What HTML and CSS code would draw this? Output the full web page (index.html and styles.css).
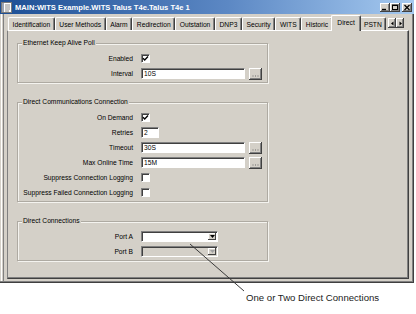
FILE: index.html
```html
<!DOCTYPE html>
<html lang="en">
<head>
    <meta charset="UTF-8">
    <title>MAIN:WITS Example.WITS Talus T4e.Talus T4e 1</title>
    <link rel="stylesheet" href="styles.css">
</head>
<body>
<div class="page">
    <div class="window">
        <div class="titlebar">
            <svg class="app-icon" width="11" height="11" viewBox="0 0 11 11">
                <rect x="0.5" y="0.5" width="10" height="10" fill="#fff" stroke="#7a7a7a"/>
                <rect x="1" y="1" width="2" height="9" fill="#9aa4b4"/>
                <path d="M4 3h5M4 5h5M4 7h5M4 9h4" stroke="#8a8a8a" stroke-width="1"/>
            </svg>
            <span class="title">MAIN:WITS Example.WITS Talus T4e.Talus T4e 1</span>
            <div class="caption-btns">
                <span class="cbtn"><svg width="8" height="7" viewBox="0 0 8 7"><path d="M1 5.5h4" stroke="#000" stroke-width="1.4"/></svg></span>
                <span class="cbtn"><svg width="8" height="7" viewBox="0 0 8 7"><rect x="1.5" y="1" width="5" height="4.5" fill="none" stroke="#000"/><path d="M1.5 1.5h5" stroke="#000"/></svg></span>
                <span class="cbtn close"><svg width="8" height="7" viewBox="0 0 8 7"><path d="M1.5 1l5 5M6.5 1l-5 5" stroke="#000" stroke-width="1.2"/></svg></span>
            </div>
        </div>

        <div class="tabstrip">
            <div class="tab">Identification</div>
            <div class="tab">User Methods</div>
            <div class="tab">Alarm</div>
            <div class="tab">Redirection</div>
            <div class="tab">Outstation</div>
            <div class="tab">DNP3</div>
            <div class="tab">Security</div>
            <div class="tab">WITS</div>
            <div class="tab">Historic</div>
            <div class="tab active">Direct</div>
            <div class="tab">PSTN</div>
            <div class="tab-scroll">
                <span class="sbtn"><svg width="5" height="5" viewBox="0 0 5 5"><path d="M3.5 0.5v4L1 2.5z" fill="#000"/></svg></span>
                <span class="sbtn"><svg width="5" height="5" viewBox="0 0 5 5"><path d="M1.5 0.5v4L4 2.5z" fill="#000"/></svg></span>
            </div>
        </div>

        <div class="panel">
            <div class="group">
                <span class="group-title">Ethernet Keep Alive Poll</span>
                <div class="row">
                    <label>Enabled</label>
                    <div class="field"><span class="check on"><svg width="7" height="7" viewBox="0 0 7 7"><path d="M1 3.2l1.7 1.8L6 1.5" fill="none" stroke="#000" stroke-width="1.3"/></svg></span></div>
                </div>
                <div class="row">
                    <label>Interval</label>
                    <div class="field"><span class="textbox wide">10S</span><span class="browse"><svg width="7" height="2" viewBox="0 0 7 2"><path d="M0.5 1h6" stroke="#6a6a6a" stroke-width="1" stroke-dasharray="1 1.5"/></svg></span></div>
                </div>
            </div>

            <div class="group">
                <span class="group-title">Direct Communications Connection</span>
                <div class="row">
                    <label>On Demand</label>
                    <div class="field"><span class="check on"><svg width="7" height="7" viewBox="0 0 7 7"><path d="M1 3.2l1.7 1.8L6 1.5" fill="none" stroke="#000" stroke-width="1.3"/></svg></span></div>
                </div>
                <div class="row">
                    <label>Retries</label>
                    <div class="field"><span class="textbox small">2</span></div>
                </div>
                <div class="row">
                    <label>Timeout</label>
                    <div class="field"><span class="textbox wide">30S</span><span class="browse"><svg width="7" height="2" viewBox="0 0 7 2"><path d="M0.5 1h6" stroke="#6a6a6a" stroke-width="1" stroke-dasharray="1 1.5"/></svg></span></div>
                </div>
                <div class="row">
                    <label>Max Online Time</label>
                    <div class="field"><span class="textbox wide">15M</span><span class="browse"><svg width="7" height="2" viewBox="0 0 7 2"><path d="M0.5 1h6" stroke="#6a6a6a" stroke-width="1" stroke-dasharray="1 1.5"/></svg></span></div>
                </div>
                <div class="row">
                    <label>Suppress Connection Logging</label>
                    <div class="field"><span class="check"></span></div>
                </div>
                <div class="row">
                    <label>Suppress Failed Connection Logging</label>
                    <div class="field"><span class="check"></span></div>
                </div>
            </div>

            <div class="group">
                <span class="group-title">Direct Connections</span>
                <div class="row">
                    <label>Port A</label>
                    <div class="field"><span class="combo"><span class="combo-btn"><svg width="5" height="3" viewBox="0 0 5 3"><path d="M0 0h5L2.5 3z" fill="#000"/></svg></span></span></div>
                </div>
                <div class="row">
                    <label>Port B</label>
                    <div class="field"><span class="combo disabled"><span class="combo-btn"><svg width="5" height="3" viewBox="0 0 5 3"><path d="M0 0h5L2.5 3z" fill="#a0a0a0"/></svg></span></span></div>
                </div>
            </div>
        </div>
    </div>

    <svg class="leader" width="416" height="314" viewBox="0 0 416 314">
        <line x1="190" y1="244" x2="244" y2="291" stroke="#3a3a3a" stroke-width="1"/>
    </svg>
    <div class="callout">One or Two Direct Connections</div>
</div>
</body>
</html>
```

FILE: styles.css
```css
/* Global */
body {
    margin: 0;
    background-color: #ffffff;
    font-family: "Liberation Sans", Arial, sans-serif;
    font-size: 6.7px;
    color: #000;
}

.page {
    position: relative;
    width: 416px;
    height: 314px;
}

/* Window frame */
.window {
    width: 414px;
    height: 283px;
    display: flex;
    flex-direction: column;
    background-color: #d4d0c8;
    box-shadow: inset -1px -1px 0 #404040,
                inset -2px -2px 0 #808080,
                inset 1px 0 0 #d4d0c8,
                inset 2px 0 0 #ffffff,
                inset 3px 0 0 #d4d0c8,
                inset 4px 0 0 #808080;
}

.titlebar {
    height: 14px;
    display: flex;
    align-items: center;
    background: linear-gradient(to right, #1d4f95, #5c88c4 55%, #a6caf0);
    color: #fff;
}

.app-icon {
    margin: 0 3px 0 1px;
}

.title {
    font-weight: bold;
    font-size: 7.6px;
}

.caption-btns {
    margin-left: auto;
    margin-right: 2px;
    display: flex;
}

.cbtn {
    width: 10px;
    height: 9px;
    box-sizing: border-box;
    display: flex;
    align-items: center;
    justify-content: center;
    background-color: #d4d0c8;
    box-shadow: inset -1px -1px 0 #404040, inset 1px 1px 0 #fff, inset -2px -2px 0 #808080;
}

.cbtn.close {
    margin-left: 2px;
}

/* Tabs */
.tabstrip {
    margin-top: 3px;
    height: 13px;
    display: flex;
    align-items: flex-start;
    padding-left: 8px;
}

.tab {
    height: 13px;
    box-sizing: border-box;
    padding: 0 3.6px;
    display: flex;
    align-items: center;
    border-top: 1px solid #fff;
    border-left: 1px solid #fff;
    border-right: 1px solid #404040;
    border-radius: 2px 2px 0 0;
    box-shadow: inset -1px 0 0 #808080;
    white-space: nowrap;
}

.tab.active {
    position: relative;
    z-index: 1;
    height: 16px;
    margin: -2px -2px 0;
    padding: 0 5.6px 2px;
    background-color: #d4d0c8;
}

.tab-scroll {
    margin-left: auto;
    margin-right: 10px;
    margin-top: 1px;
    display: flex;
}

.sbtn {
    width: 8px;
    height: 10px;
    box-sizing: border-box;
    display: flex;
    align-items: center;
    justify-content: center;
    box-shadow: inset -1px -1px 0 #404040, inset 1px 1px 0 #fff, inset -2px -2px 0 #808080;
}

/* Tab page */
.panel {
    flex: 1;
    margin: 0 5px 4px 7px;
    padding: 12px 0 0 9px;
    border-top: 1px solid #fff;
    border-left: 1px solid #808080;
    border-right: 1px solid #404040;
    border-bottom: 1px solid #404040;
    box-shadow: inset -1px -1px 0 #808080;
}

.group {
    position: relative;
    width: 251px;
    box-sizing: border-box;
    padding: 7px 0 1px;
    border: 1px solid #aeaaa2;
    box-shadow: inset 1px 1px 0 #f4f3ef, 1px 1px 0 #f4f3ef;
}

.group + .group {
    margin-top: 19px;
}

.group-title {
    position: absolute;
    left: 4px;
    top: -5px;
    padding: 0 1px;
    background-color: #d4d0c8;
    line-height: 8px;
}

.row {
    height: 15px;
    display: grid;
    grid-template-columns: 115px auto;
    column-gap: 8px;
    align-items: center;
}

.row label {
    text-align: right;
    white-space: nowrap;
}

.field {
    display: flex;
    align-items: center;
}

/* Controls */
.check {
    width: 9px;
    height: 9px;
    box-sizing: border-box;
    display: flex;
    align-items: center;
    justify-content: center;
    background-color: #fff;
    border-top: 1px solid #808080;
    border-left: 1px solid #808080;
    border-right: 1px solid #fff;
    border-bottom: 1px solid #fff;
    box-shadow: inset 1px 1px 0 #404040;
}

.textbox {
    height: 11px;
    box-sizing: border-box;
    padding-left: 2px;
    line-height: 9px;
    background-color: #fff;
    border-top: 1px solid #808080;
    border-left: 1px solid #808080;
    border-right: 1px solid #fff;
    border-bottom: 1px solid #fff;
    box-shadow: inset 1px 1px 0 #404040;
}

.textbox.wide {
    width: 104px;
}

.textbox.small {
    width: 18px;
}

.browse {
    width: 13px;
    height: 12px;
    margin-left: 4px;
    box-sizing: border-box;
    display: flex;
    align-items: flex-end;
    justify-content: center;
    padding-bottom: 3px;
    box-shadow: inset -1px -1px 0 #404040, inset 1px 1px 0 #fff, inset -2px -2px 0 #808080;
}

.browse svg {
    display: block;
}

.combo {
    width: 77px;
    height: 11px;
    box-sizing: border-box;
    display: flex;
    justify-content: flex-end;
    padding: 1px;
    background-color: #fff;
    border-top: 1px solid #808080;
    border-left: 1px solid #808080;
    border-right: 1px solid #fff;
    border-bottom: 1px solid #fff;
    box-shadow: inset 1px 1px 0 #404040;
}

.combo.disabled {
    background-color: #d4d0c8;
}

.combo-btn {
    width: 8px;
    height: 7px;
    display: flex;
    align-items: center;
    justify-content: center;
    background-color: #d4d0c8;
    box-shadow: inset -1px -1px 0 #404040, inset 1px 1px 0 #fff;
}

/* Annotation */
.leader {
    position: absolute;
    left: 0;
    top: 0;
}

.callout {
    position: absolute;
    left: 246px;
    top: 292px;
    font-size: 9.6px;
    color: #222;
}
```
